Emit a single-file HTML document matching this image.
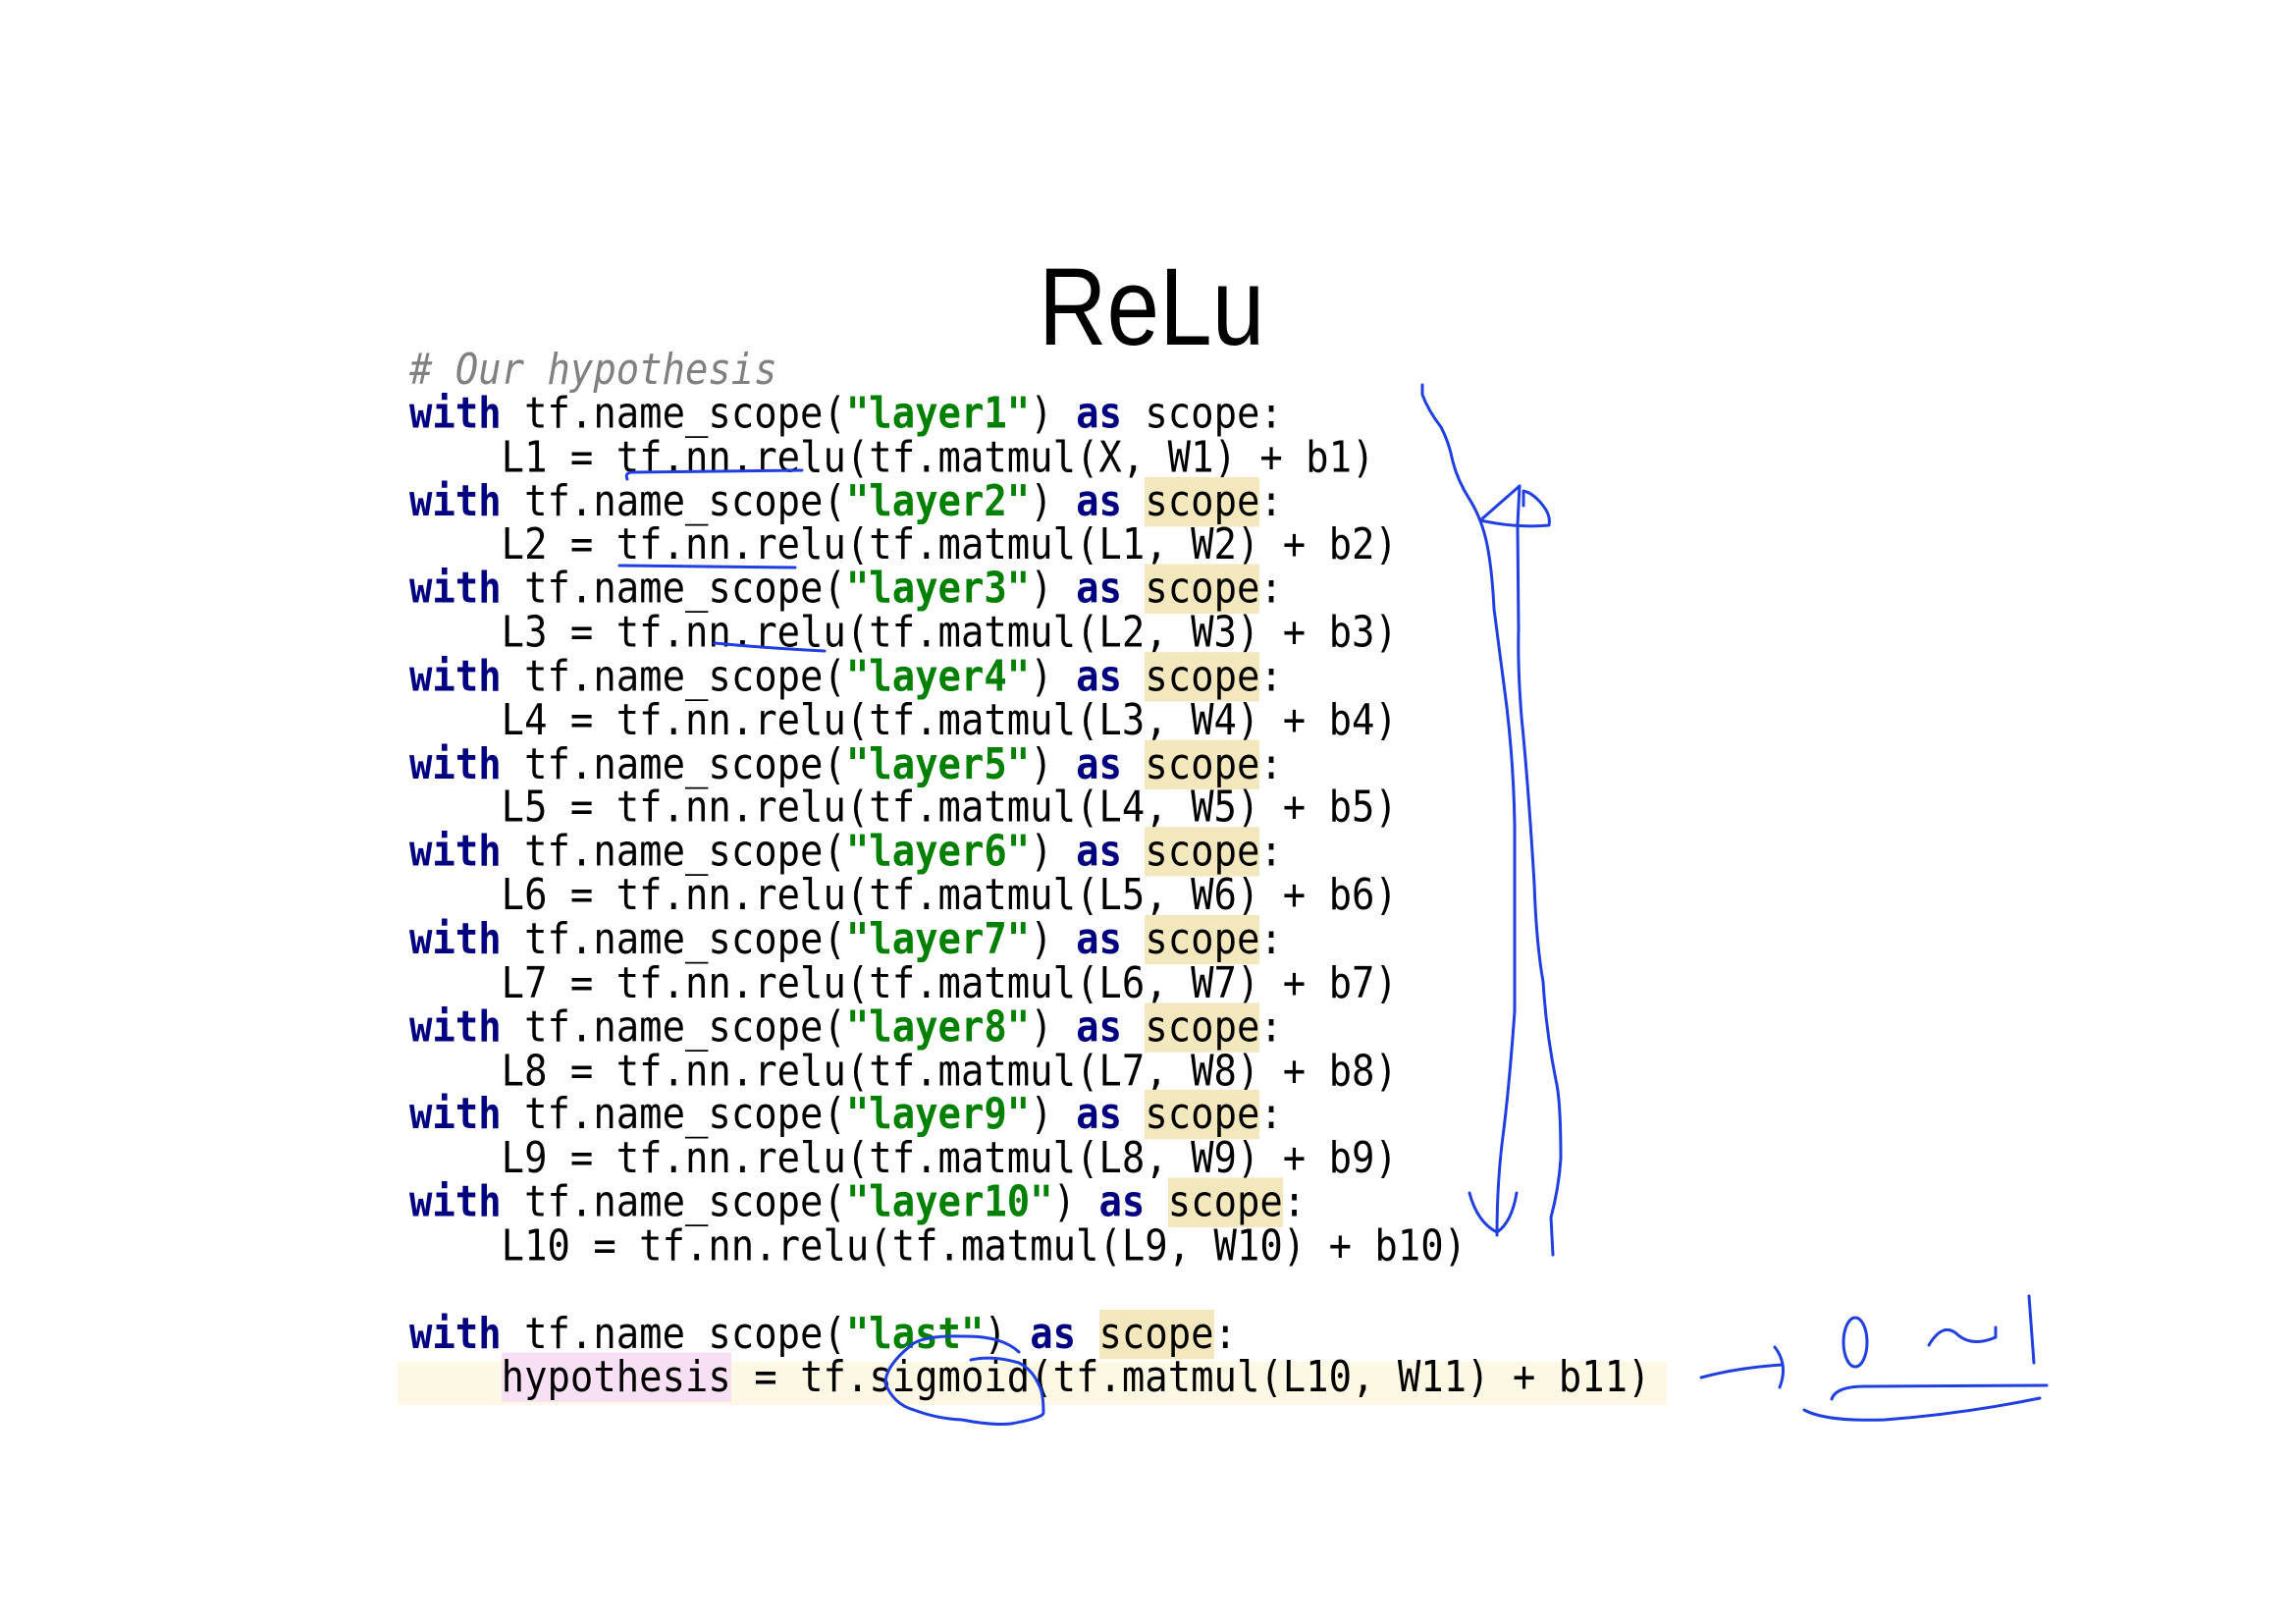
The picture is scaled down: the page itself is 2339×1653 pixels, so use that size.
<!DOCTYPE html>
<html><head><meta charset="utf-8"><style>
html,body{margin:0;padding:0;background:#fff;width:2339px;height:1653px;overflow:hidden;position:relative}
.title{position:absolute;left:1058px;top:243px;font-family:"Liberation Sans",sans-serif;font-size:112px;line-height:140px;color:#000;transform:scaleX(0.86);transform-origin:0 0}
pre{position:absolute;left:417px;top:355px;margin:0;font-family:"DejaVu Sans Mono","Liberation Mono",monospace;font-size:38.9px;line-height:39.85px;color:#000;transform:scaleY(1.12);transform-origin:0 0}
.k{color:#000080;font-weight:bold}
.s{color:#008000;font-weight:bold}
.c{color:#808080;font-style:italic}
.h{background:#f3e8bd}
.p{background:#f7e0f3}
.lastbg{position:absolute;left:405px;top:1387px;width:1293px;height:44px;background:#fcf8e4}
svg{position:absolute;left:0;top:0}
</style></head><body>
<div class="title">ReLu</div>
<div class="lastbg"></div>
<pre><span class="c"># Our hypothesis</span>
<span class="k">with</span> tf.name_scope(<span class="s">"layer1"</span>) <span class="k">as</span> scope:
    L1 = tf.nn.relu(tf.matmul(X, W1) + b1)
<span class="k">with</span> tf.name_scope(<span class="s">"layer2"</span>) <span class="k">as</span> <span class="h">scope</span>:
    L2 = tf.nn.relu(tf.matmul(L1, W2) + b2)
<span class="k">with</span> tf.name_scope(<span class="s">"layer3"</span>) <span class="k">as</span> <span class="h">scope</span>:
    L3 = tf.nn.relu(tf.matmul(L2, W3) + b3)
<span class="k">with</span> tf.name_scope(<span class="s">"layer4"</span>) <span class="k">as</span> <span class="h">scope</span>:
    L4 = tf.nn.relu(tf.matmul(L3, W4) + b4)
<span class="k">with</span> tf.name_scope(<span class="s">"layer5"</span>) <span class="k">as</span> <span class="h">scope</span>:
    L5 = tf.nn.relu(tf.matmul(L4, W5) + b5)
<span class="k">with</span> tf.name_scope(<span class="s">"layer6"</span>) <span class="k">as</span> <span class="h">scope</span>:
    L6 = tf.nn.relu(tf.matmul(L5, W6) + b6)
<span class="k">with</span> tf.name_scope(<span class="s">"layer7"</span>) <span class="k">as</span> <span class="h">scope</span>:
    L7 = tf.nn.relu(tf.matmul(L6, W7) + b7)
<span class="k">with</span> tf.name_scope(<span class="s">"layer8"</span>) <span class="k">as</span> <span class="h">scope</span>:
    L8 = tf.nn.relu(tf.matmul(L7, W8) + b8)
<span class="k">with</span> tf.name_scope(<span class="s">"layer9"</span>) <span class="k">as</span> <span class="h">scope</span>:
    L9 = tf.nn.relu(tf.matmul(L8, W9) + b9)
<span class="k">with</span> tf.name_scope(<span class="s">"layer10"</span>) <span class="k">as</span> <span class="h">scope</span>:
    L10 = tf.nn.relu(tf.matmul(L9, W10) + b10)

<span class="k">with</span> tf.name_scope(<span class="s">"last"</span>) <span class="k">as</span> <span class="h">scope</span>:
    <span class="p">hypothesis</span> = tf.sigmoid(tf.matmul(L10, W11) + b11)</pre>
<svg width="2339" height="1653" viewBox="0 0 2339 1653" fill="none" stroke="#1f3fe0" stroke-width="3" stroke-linecap="round" stroke-linejoin="round">
<path d="M639 488 Q636 481 645 481 L817 479"/>
<path d="M631 576 L810 578"/>
<path d="M728 655 Q780 660 840 663"/>
<path d="M1449 392 L1449 402 Q1455 418 1468 435 Q1476 450 1480 470 Q1485 490 1498 510 Q1510 530 1515 555 Q1520 580 1522 620 Q1530 680 1535 720 Q1542 780 1543 840 L1543 1030 Q1538 1100 1532 1150 Q1525 1200 1525 1258"/>
<path d="M1497 1215 Q1505 1245 1525 1255 Q1540 1245 1545 1215"/>
<path d="M1582 1278 L1580 1240 Q1588 1210 1590 1180 Q1590 1120 1585 1100 Q1575 1050 1572 1000 Q1565 960 1563 900 Q1557 800 1550 730 Q1546 680 1547 640 L1546 535 L1548 495"/>
<path d="M1548 495 L1508 530 Q1545 538 1578 535 Q1580 525 1572 515 Q1562 502 1552 500 L1552 515"/>
<path d="M1038 1377 Q1020 1360 980 1361 Q945 1360 931 1368 Q902 1390 902 1409 Q910 1430 931 1436 Q955 1445 980 1446 Q1010 1452 1030 1450 Q1063 1444 1063 1439 Q1063 1420 1059 1412 Q1052 1395 1038 1388 Q1010 1380 989 1385"/>
<path d="M1733 1403 Q1770 1393 1815 1390"/>
<path d="M1808 1372 Q1822 1390 1813 1413"/>
<ellipse cx="1890" cy="1367" rx="12" ry="25"/>
<path d="M1965 1370 Q1980 1345 1995 1360 Q2010 1372 2033 1362 L2033 1352"/>
<path d="M2067 1320 L2072 1388"/>
<path d="M1866 1425 Q1870 1412 1900 1412 L2085 1411"/>
<path d="M1838 1436 Q1860 1448 1920 1446 Q2000 1440 2078 1424"/>
</svg>
</body></html>
